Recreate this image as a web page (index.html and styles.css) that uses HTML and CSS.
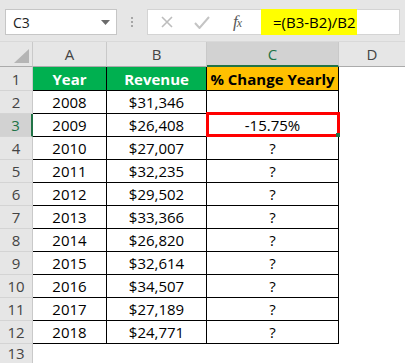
FILE: index.html
```html
<!DOCTYPE html>
<html lang="en">
<head>
  <meta charset="UTF-8" />
  <title>% Change Yearly</title>
  <link rel="stylesheet" href="styles.css">
</head>
<body>
  <div class="toolbar">
    <div class="namebox">
      <span>C3</span>
      <svg class="caret" width="9" height="5" viewBox="0 0 9 5"><path d="M0 0h9L4.5 5z" fill="#6b6b6b"/></svg>
    </div>
    <div class="grip"><i></i><i></i><i></i></div>
    <div class="formula">
      <svg class="fbtn" width="12" height="12" viewBox="0 0 12 12"><path d="M1 1l10 10M11 1L1 11" stroke="#bdbdbd" stroke-width="1.6" fill="none"/></svg>
      <svg class="fbtn" width="16" height="13" viewBox="0 0 16 13"><path d="M1 7l4.5 5L15 1" stroke="#c4c4c4" stroke-width="2" fill="none"/></svg>
      <span class="fx"><i>f</i><i class="sub">x</i></span>
      <span class="expr">=(B3-B2)/B2</span>
    </div>
  </div>

  <div class="sheet">
    <div class="corner"><span class="tri"></span></div>
    <div class="colhead">A</div>
    <div class="colhead">B</div>
    <div class="colhead active">C</div>
    <div class="colhead last">D</div>

    <div class="rowhead">1</div>
    <div class="cell head green">Year</div>
    <div class="cell head green">Revenue</div>
    <div class="cell head amber">% Change Yearly</div>
    <div class="blank"></div>
  </div>

  <script>
    const rows = [
      ['2008', '$31,346', ''],
      ['2009', '$26,408', '-15.75%'],
      ['2010', '$27,007', '?'],
      ['2011', '$32,235', '?'],
      ['2012', '$29,502', '?'],
      ['2013', '$33,366', '?'],
      ['2014', '$26,820', '?'],
      ['2015', '$32,614', '?'],
      ['2016', '$34,507', '?'],
      ['2017', '$27,189', '?'],
      ['2018', '$24,771', '?']
    ];
    const sheet = document.querySelector('.sheet');

    rows.forEach((r, i) => {
      const n = i + 2;
      let html = `<div class="rowhead${n === 3 ? ' active' : ''}">${n}</div>`;
      html += `<div class="cell">${r[0]}</div><div class="cell">${r[1]}</div>`;
      if (n === 3) {
        html += `<div class="cell selected">${r[2]}<span class="outline"><span class="handle"></span></span></div>`;
      } else {
        html += `<div class="cell">${r[2]}</div>`;
      }
      html += '<div class="blank"></div>';
      sheet.insertAdjacentHTML('beforeend', html);
    });

    sheet.insertAdjacentHTML('beforeend', '<div class="rowhead end">13</div><div class="blank"></div><div class="blank"></div><div class="blank"></div><div class="blank"></div>');
  </script>
</body>
</html>
```

FILE: styles.css
```css
* { box-sizing: border-box; margin: 0; padding: 0; }

body {
  width: 405px;
  height: 363px;
  overflow: hidden;
  background: #fff;
  font-family: 'Open Sans', 'Liberation Sans', sans-serif;
  color: #000;
}

/* formula bar */
.toolbar {
  height: 42px;
  background: #e6e6e6;
  display: flex;
  align-items: flex-start;
  padding: 9px 5px 0 5px;
  border-bottom: 1px solid #d9d9d9;
}

.namebox {
  width: 112px;
  height: 26px;
  background: #fff;
  border: 1px solid #c6c6c6;
  display: flex;
  align-items: center;
  justify-content: space-between;
  padding: 0 6px 0 7px;
  font-size: 14px;
  color: #222;
}

.grip {
  width: 30px;
  height: 26px;
  display: flex;
  flex-direction: column;
  align-items: center;
  justify-content: center;
  gap: 2px;
}

.grip i {
  width: 2px;
  height: 2px;
  background: #a6a6a6;
}

.formula {
  flex: 1;
  height: 26px;
  background: #fff;
  border: 1px solid #d4d4d4;
  display: flex;
  align-items: center;
  padding-left: 13px;
}

.fbtn { flex: none; }
.fbtn + .fbtn { margin-left: 21px; }

.fx {
  margin-left: 23px;
  font-family: 'Liberation Serif', serif;
  font-size: 17px;
  color: #595959;
  width: 28px;
}

.fx .sub {
  font-size: 12px;
  margin-left: -1px;
}

.expr {
  align-self: stretch;
  margin: -1px 0;
  width: 96px;
  background: #ffff00;
  font-size: 15px;
  line-height: 26px;
  padding-left: 12px;
}

/* grid */
.sheet {
  display: grid;
  grid-template-columns: 33px 74px 100px 132px 1fr;
  grid-template-rows: 25px 24px repeat(11, 23px) 19px;
  font-size: 15px;
}

.corner, .colhead, .rowhead {
  background: #e6e6e6;
  color: #444;
  font-size: 15px;
}

.corner {
  position: relative;
  border-right: 1px solid #c9c9c9;
  border-bottom: 1px solid #ababab;
}

.tri {
  position: absolute;
  right: 3px;
  bottom: 3px;
  width: 0;
  height: 0;
  border-left: 15px solid transparent;
  border-bottom: 14px solid #b5b5b5;
}

.colhead {
  display: flex;
  align-items: center;
  justify-content: center;
  border-right: 1px solid #c9c9c9;
  border-bottom: 1px solid #ababab;
}

.colhead.last { border-right: none; }

.colhead.active {
  background: #d2d2d2;
  color: #217346;
  border-bottom: 2px solid #217346;
}

.rowhead {
  display: flex;
  align-items: center;
  justify-content: center;
  border-right: 1px solid #c9c9c9;
  border-bottom: 1px solid #d4d4d4;
}

.rowhead.active {
  background: #d2d2d2;
  color: #217346;
  border-right: 2px solid #217346;
}

.rowhead.end {
  border-bottom: none;
  align-items: flex-start;
  line-height: 19px;
}

.cell {
  display: flex;
  align-items: center;
  justify-content: center;
  border-right: 1px solid #000;
  border-bottom: 1px solid #000;
  white-space: nowrap;
}

.cell.head { font-weight: 700; }
.green { background: #00b050; color: #fff; }
.amber { background: #ffc000; color: #000; }

.selected { position: relative; }

.outline {
  position: absolute;
  top: -2px;
  left: -1px;
  right: -2px;
  bottom: -1px;
  border: 3px solid #ff0000;
}

.handle {
  position: absolute;
  right: -3px;
  bottom: -3px;
  width: 4px;
  height: 4px;
  background: #217346;
}

.blank { background: #fff; }
```
